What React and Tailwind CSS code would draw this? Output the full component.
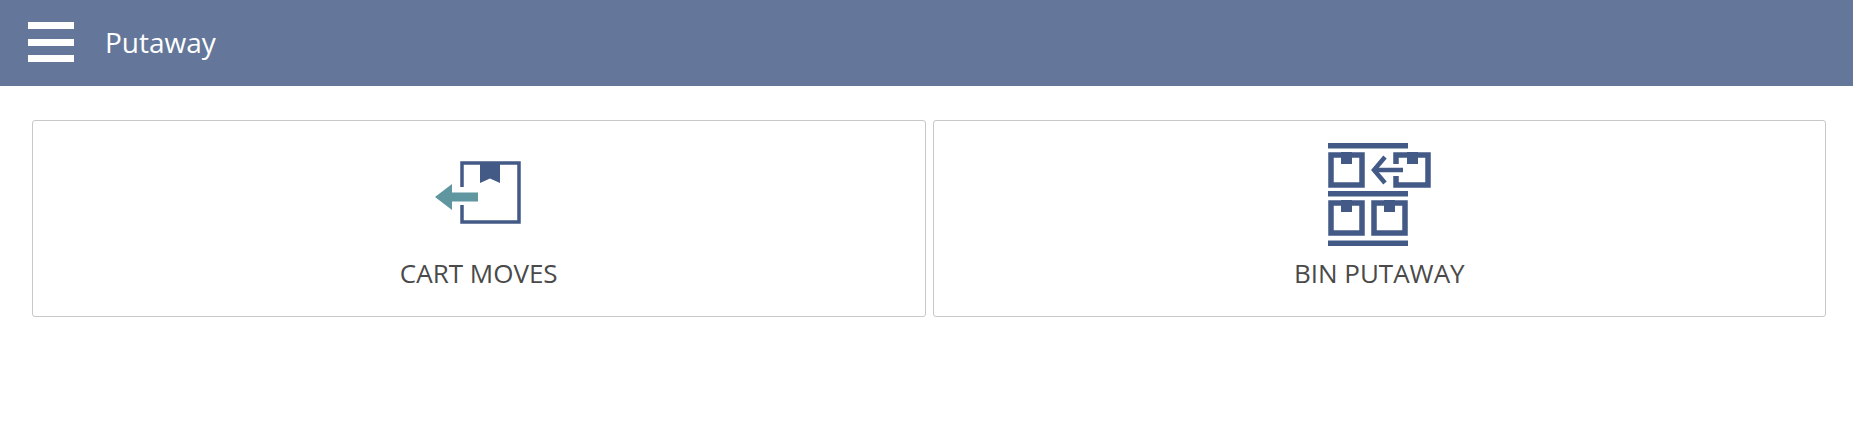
import React from 'react';

function CartIcon() {
  return (
    <svg className="w-[110px] h-[110px]" viewBox="424 140 110 110" fill="none">
      <path d="M462 188V164H519V223H462V206" stroke="#435a86" strokeWidth="3.5" />
      <path d="M480 163H500V184L490 179.5L480 184Z" fill="#435a86" />
      <path d="M435 198L452 185V193.5H478V202.5H452V211Z" fill="#5f969f" />
    </svg>
  );
}

function Box({ x, y, open }) {
  const c = '#435a86';
  return (
    <g>
      {open ? (
        <path d={`M${x + 3} ${y + 12}V${y + 3}H${x + 35}V${y + 33}H${x + 3}V${y + 24}`} stroke={c} strokeWidth="5.5" />
      ) : (
        <rect x={x + 3} y={y + 3} width="31" height="30" stroke={c} strokeWidth="5.5" />
      )}
      <rect x={x + (open ? 14 : 13)} y={y} width="11" height="12" fill={c} />
    </g>
  );
}

function BinIcon() {
  const c = '#435a86';
  return (
    <svg className="w-[110px] h-[110px]" viewBox="1324 140 110 110" fill="none">
      <rect x="1328" y="144" width="80" height="5.5" fill={c} />
      <rect x="1328" y="192" width="80" height="5.5" fill={c} />
      <rect x="1328" y="241.5" width="80" height="5.5" fill={c} />
      <Box x={1328} y={153} />
      <Box x={1393} y={153} open />
      <Box x={1328} y={201} />
      <Box x={1371} y={201} />
      <path d="M1385 158L1374 171L1385 184" stroke={c} strokeWidth="4.5" />
      <path d="M1375 171H1403" stroke={c} strokeWidth="4.5" />
    </svg>
  );
}

function Tile({ icon, label }) {
  return (
    <div className="h-[197px] bg-white border border-[#c8c8c8] rounded-[3px] flex flex-col items-center pt-[18px]">
      {icon}
      <div className="mt-[8px] text-[26px] leading-[33px] text-[#4a4a4a]">{label}</div>
    </div>
  );
}

export default function App() {
  return (
    <div className="min-h-[428px] bg-white font-['Open_Sans',sans-serif]">
      <header className="h-[86px] bg-[#64779a] flex items-center pl-[28px] pb-[2px]">
        <div className="w-[46px] h-[40px] flex flex-col justify-between">
          <span className="block h-[7px] bg-white"></span>
          <span className="block h-[7px] bg-white"></span>
          <span className="block h-[7px] bg-white"></span>
        </div>
        <h1 className="ml-[31px] text-[28px] font-normal text-white">Putaway</h1>
      </header>
      <main className="grid grid-cols-2 gap-[7px] pl-8 pr-[27px] pt-[34px]">
        <Tile icon={<CartIcon />} label="CART MOVES" />
        <Tile icon={<BinIcon />} label="BIN PUTAWAY" />
      </main>
    </div>
  );
}
